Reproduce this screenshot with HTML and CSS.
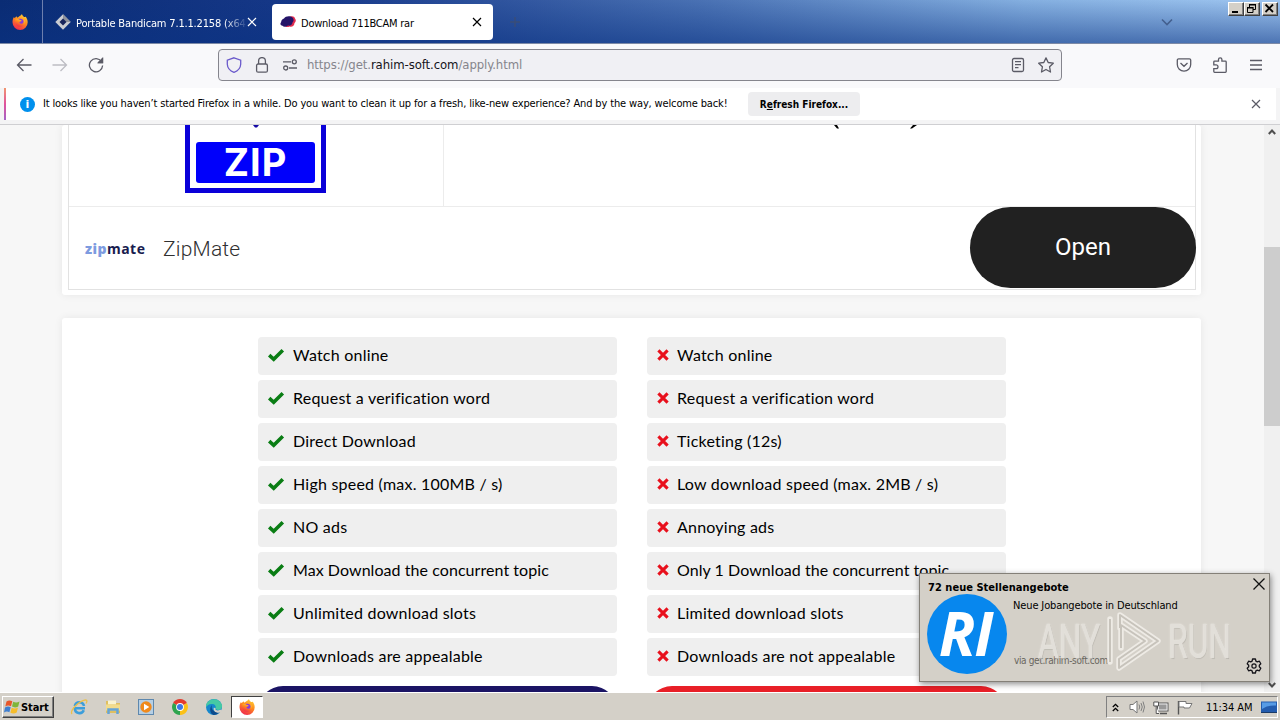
FILE: index.html
```html
<!DOCTYPE html>
<html lang="en">
<head>
<meta charset="utf-8">
<title>Download 711BCAM rar</title>
<link rel="stylesheet" href="styles.css">
</head>
<body>
<svg class="defs" width="0" height="0">
  <defs>
    <linearGradient id="fxg" x1="0.8" y1="0" x2="0.3" y2="1"><stop offset="0" stop-color="#ffd83a"/><stop offset=".45" stop-color="#ff8a1e"/><stop offset="1" stop-color="#f0284e"/></linearGradient>
    <symbol id="firefox" viewBox="0 0 16 16">
      <path d="M8 1.8c1-.2 1.400-1.200 2-1.800 0 1.300 1 1.900 2 3 .6.3 1.600-.2 1.700-.6.9 1.400 2 3.300 2 5.900a7.600 7.600 0 0 1-15.200 0c0-2.100.6-4.100 1.500-5.300.3.8.5 1 .9 1.100.5-.9 1-1.500 1.800-1.900 0 .8.500 1.200 1 1.400z" fill="url(#fxg)"/>
      <circle cx="8.200" cy="8.500" r="3.700" fill="#8a3ad8"/>
      <path d="M3.300 5.200c1.600-.7 3.200-.2 4.200.6 1 .2 2 .2 2 .9 0 .8-1.600.8-2 1.400-.3 1.500 1.700 2 3 1.300 1-.6 1.600-2 1-4 1.700 1.200 2 3.300 1.100 5-1.700 3-7 3.300-8.800-.2-.8-1.600-.9-3.400-.5-5z" fill="url(#fxg)"/>
    </symbol>
    <symbol id="check" viewBox="0 0 18 14"><path d="M2.200 7.200 6.700 11.300 15.800 2.300" fill="none" stroke="#0a7d14" stroke-width="3.600"/></symbol>
    <symbol id="cross" viewBox="0 0 12 12"><path d="M1.400 1.400 10.600 10.600M10.600 1.400 1.400 10.600" fill="none" stroke="#e8101c" stroke-width="3.100"/></symbol>
    <symbol id="x" viewBox="0 0 10 10"><path d="M1 1 9 9M9 1 1 9" fill="none" stroke="currentColor" stroke-width="1.200"/></symbol>
  </defs>
</svg>
<div class="screen">
  <header class="tabs">
    <div class="pinned"><svg width="16" height="16"><use href="#firefox"/></svg></div>
    <div class="tab idle">
      <svg width="16" height="16" viewBox="0 0 16 16"><path d="M8 .3 15.700 8 8 15.700.3 8z" fill="#c9ccd2"/><path d="M8 .3 15.700 8 8 8z" fill="#8e929c"/><path d="M8 4.500 11.500 8 8 11.500 4.500 8z" fill="#17255c"/></svg>
      <span class="tab-label">Portable Bandicam 7.1.1.2158 (x64</span>
      <svg class="tab-x" width="10" height="10"><use href="#x"/></svg>
    </div>
    <div class="tab current">
      <svg width="16" height="16" viewBox="0 0 16 16"><path d="M8.500 4c2-2.500 6-2 6.500.5 1.200 1.500 1 3.500-.5 4.500 0 2.500-2.500 4.500-5 3.500-2 1-4 .5-5-1z" fill="#e22b4e"/><path d="M4 4.500c1.500-2.500 6-3 8.500-1 1.500 1.500 1.500 3.500 0 5 0 2.500-2.500 3.500-4.500 3-2 1.500-4.500 1.500-5.500.3C.3 11.700-.2 9.500 1.200 8 1 6.500 2.500 5 4 4.500z" fill="#241468"/></svg>
      <span class="tab-label">Download 711BCAM rar</span>
      <svg class="tab-x" width="10" height="10"><use href="#x"/></svg>
    </div>
    <svg class="plus" width="12" height="12" viewBox="0 0 12 12"><path d="M6 1v10M1 6h10" stroke="#3a4d78" stroke-width="1.400"/></svg>
    <svg class="chev" width="12" height="8" viewBox="0 0 12 8"><path d="M1 1.500 6 6.500 11 1.500" fill="none" stroke="#44608f" stroke-width="1.600"/></svg>
    <div class="winbtns">
      <i class="wb"><svg width="13" height="11" viewBox="0 0 13 11"><path d="M3 8h6v2H3z"/></svg></i>
      <i class="wb"><svg width="13" height="11" viewBox="0 0 13 11"><path d="M4.500 4V1.500h6v5H8M2.500 4.500h5.500v5H2.500z" fill="none" stroke="#000"/><path d="M4 1h7v1.500H4zM2 4h6.500v1.500H2z"/></svg></i>
      <i class="wb last"><svg width="13" height="11" viewBox="0 0 13 11"><path d="M2.500 1.500 10 9M10 1.500 2.500 9" stroke="#000" stroke-width="1.800"/></svg></i>
    </div>
  </header>

  <nav class="toolbar">
    <svg width="16" height="16" viewBox="0 0 16 16" class="ic"><path d="M15.500 8H1.500M7.500 2 1.500 8l6 6"/></svg>
    <svg width="16" height="16" viewBox="0 0 16 16" class="ic off"><path d="M.5 8h14M8.500 2l6 6-6 6"/></svg>
    <svg width="16" height="16" viewBox="0 0 16 16" class="ic"><path d="M13.500 4.500A6.600 6.600 0 1 0 14.600 8.500M14.500 1v4.500H10"/><path d="M14.500 1.500v4h-4z" fill="#5b5b66"/></svg>
    <div class="urlbar">
      <svg width="16" height="16" viewBox="0 0 16 16" class="ic shield"><path d="M8 .8 14.700 3.200v4C14.500 11 11.500 14 8 15.300 4.500 14 1.500 11 1.300 7.200v-4z"/></svg>
      <svg width="16" height="16" viewBox="0 0 16 16" class="ic"><rect x="2.600" y="7" width="10.800" height="8.200" rx="1.500"/><path d="M4.600 7V4a3.400 3.400 0 0 1 6.800 0v3"/></svg>
      <svg width="16" height="16" viewBox="0 0 16 16" class="ic"><path d="M1 4.800h8M7 11h8"/><circle cx="12.300" cy="4.800" r="2"/><circle cx="3.700" cy="11" r="2"/></svg>
      <span class="url">https://get.<b>rahim-soft.com</b>/apply.html</span>
      <svg width="16" height="16" viewBox="0 0 16 16" class="ic"><rect x="2.500" y="1.500" width="11" height="13" rx="1.500"/><path d="M5 4.700h6M5 7.700h6M5 10.700h3.500"/></svg>
      <svg width="16" height="16" viewBox="0 0 16 16" class="ic"><path d="M8 .9 10.200 5.500 15.300 6.200 11.600 9.800 12.500 15 8 12.500 3.500 15 4.400 9.800.7 6.200 5.800 5.500z" stroke-linejoin="round"/></svg>
    </div>
    <svg width="16" height="16" viewBox="0 0 16 16" class="ic pocket"><path d="M2.600 1.800h10.800a1.300 1.300 0 0 1 1.300 1.300V7.500a6.700 6.700 0 0 1-13.400 0V3.100a1.300 1.300 0 0 1 1.300-1.300zM4.500 6 8 9.300 11.500 6"/></svg>
    <svg width="16" height="16" viewBox="0 0 16 16" class="ic"><path d="M1.800 7.200V4.900a.8.800 0 0 1 .8-.8H6.500V2.500a1.700 1.700 0 0 1 3.400 0v1.600h3.500a.8.800 0 0 1 .8.8v9.600a.8.800 0 0 1-.8.800H2.600a.8.800 0 0 1-.8-.8v-2.900h2.300a1.700 1.700 0 0 0 0-3.800H1.800z"/></svg>
    <svg width="16" height="16" viewBox="0 0 16 16" class="ic"><path d="M2 3.500h12M2 8h12M2 12.500h12"/></svg>
  </nav>

  <div class="notice">
    <div class="notice-in">
      <i class="info">i</i>
      <span class="notice-text">It looks like you haven’t started Firefox in a while. Do you want to clean it up for a fresh, like-new experience? And by the way, welcome back!</span>
      <span class="refresh">R<u>e</u>fresh Firefox...</span>
      <svg class="notice-x" width="10" height="10"><use href="#x"/></svg>
    </div>
  </div>

  <main class="viewport">
    <div class="page">
      <section class="card ad">
        <div class="ad-box">
          <div class="ad-top">
            <div class="ad-pic">
              <div class="zipdoc"><svg class="nub" width="8" height="3" viewBox="0 0 8 3"><path d="M1 0h6L5 2.500H3z" fill="#1409a5"/></svg><span class="zip">ZIP</span></div>
            </div>
            <div class="ad-title"><svg width="84" height="4" viewBox="0 0 84 4"><path d="M0 0h3l2 3.500H3zM83 0h-4l-3 3.500h2z" fill="#000"/></svg></div>
          </div>
          <div class="ad-bottom">
            <span class="brand"><b>zip</b>mate</span>
            <span class="brand-name">ZipMate</span>
            <span class="open">Open</span>
          </div>
        </div>
      </section>
      <section class="card compare">
        <div class="col yes">
          <div class="row"><svg width="18" height="14"><use href="#check"/></svg><span>Watch online</span></div>
          <div class="row"><svg width="18" height="14"><use href="#check"/></svg><span>Request a verification word</span></div>
          <div class="row"><svg width="18" height="14"><use href="#check"/></svg><span>Direct Download</span></div>
          <div class="row"><svg width="18" height="14"><use href="#check"/></svg><span>High speed (max. 100MB / s)</span></div>
          <div class="row"><svg width="18" height="14"><use href="#check"/></svg><span>NO ads</span></div>
          <div class="row tight"><svg width="18" height="14"><use href="#check"/></svg><span>Max Download the concurrent topic</span></div>
          <div class="row"><svg width="18" height="14"><use href="#check"/></svg><span>Unlimited download slots</span></div>
          <div class="row"><svg width="18" height="14"><use href="#check"/></svg><span>Downloads are appealable</span></div>
          <div class="cta navy"></div>
        </div>
        <div class="col no">
          <div class="row"><svg width="12" height="12"><use href="#cross"/></svg><span>Watch online</span></div>
          <div class="row"><svg width="12" height="12"><use href="#cross"/></svg><span>Request a verification word</span></div>
          <div class="row"><svg width="12" height="12"><use href="#cross"/></svg><span>Ticketing (12s)</span></div>
          <div class="row"><svg width="12" height="12"><use href="#cross"/></svg><span>Low download speed (max. 2MB / s)</span></div>
          <div class="row"><svg width="12" height="12"><use href="#cross"/></svg><span>Annoying ads</span></div>
          <div class="row tight"><svg width="12" height="12"><use href="#cross"/></svg><span>Only 1 Download the concurrent topic</span></div>
          <div class="row"><svg width="12" height="12"><use href="#cross"/></svg><span>Limited download slots</span></div>
          <div class="row"><svg width="12" height="12"><use href="#cross"/></svg><span>Downloads are not appealable</span></div>
          <div class="cta red"></div>
        </div>
      </section>
    </div>
    <div class="scrollbar">
      <svg width="8" height="6" viewBox="0 0 8 6"><path d="M.8 5 4 1.500 7.200 5" fill="none" stroke="#505050" stroke-width="2"/></svg>
      <div class="thumb"></div>
      <svg width="8" height="6" viewBox="0 0 8 6"><path d="M.8 1 4 4.500 7.200 1" fill="none" stroke="#505050" stroke-width="2"/></svg>
    </div>
  </main>

  <footer class="taskbar">
    <div class="start">
      <svg width="17" height="16" viewBox="0 0 17 16"><path d="M2.500 2.500C4.500 1 6.500 1.200 8.300 2.300L7 7.300C5 6.200 3.200 6.200 1.300 7.500z" fill="#e8572a"/><path d="M9.200 2.700c2 1.100 4 1.100 6.300-.2l-1.300 5c-2 1.200-4.200 1.200-6.200.1z" fill="#7fb53a"/><path d="M1 8.500c2-1.300 4-1.200 5.700-.2l-1.300 5c-1.700-1-3.500-1-5.400.2z" fill="#3f7fd0"/><path d="M7.700 8.700c2 1.100 4 1.100 6.300-.1l-1.300 5c-2 1.200-4.200 1.200-6.300.1z" fill="#f6bd2c"/></svg>
      <span>Start</span>
    </div>
    <div class="quick">
      <svg width="18" height="18" viewBox="0 0 18 18"><path d="M15 10.300H4.800a4.700 4.700 0 0 0 9 2M4.800 8a4.700 4.700 0 0 1 9.200 0" fill="none" stroke="#3c9edb" stroke-width="2.600"/><path d="M2 16C-.5 12.500 9 3 15.500 1.800c2 0 1.700 2 .5 3.700" fill="none" stroke="#ecc04a" stroke-width="1.300"/></svg>
      <svg width="18" height="18" viewBox="0 0 18 18"><path d="M2 3h6l1 2h7v10H2z" fill="#dfbf60"/><path d="M4 2.500h8v4H4z" fill="#f9f3d0"/><path d="M2 6.500h14v6H2z" fill="#f2dc8c"/><path d="M4.500 16v-4.500h9V16" fill="none" stroke="#65a4d6" stroke-width="2.500"/></svg>
      <svg width="18" height="18" viewBox="0 0 18 18"><rect x="1.500" y="1.500" width="15" height="15" fill="#b6cfe4" stroke="#5e88ae"/><circle cx="9" cy="9" r="5.700" fill="#f08a1c"/><path d="M7 5.800 12.300 9 7 12.200z" fill="#fff"/></svg>
      <svg width="18" height="18" viewBox="0 0 18 18"><path d="M9 9 2.100 5A8 8 0 0 1 15.900 5z" fill="#e33b2e"/><path d="M9 9 2.100 5A8 8 0 0 0 9 17z" fill="#2da44e"/><path d="M9 9l6.900-4A8 8 0 0 1 9 17z" fill="#fbc116"/><circle cx="9" cy="9" r="3.900" fill="#fff"/><circle cx="9" cy="9" r="3" fill="#3b78e7"/></svg>
      <svg width="18" height="18" viewBox="0 0 18 18"><circle cx="9" cy="9" r="8" fill="#1687cc"/><path d="M2 5c3-5 12-5.500 15 2 .5 3-1.500 5-4 5-2 0-3-.6-2.500-1.700.8-2-.5-4-3-4.300C5 5.500 3 6.500 1 9c0-1.500.3-3 1-4z" fill="#45c9a4"/><path d="M7 7c-1.500 4 1.500 7.500 7.500 7-1.500 2-4 3-6 2.900C5 16 4 10 7 7z" fill="#0c4a8c"/><path d="M10.500 10c-1 2 2 3.300 5.700 1.600l1 1.800-3 1.300c-4 .3-6-2.200-5.500-5z" fill="#d4d0c8"/></svg>
      <div class="running"><svg width="16" height="16"><use href="#firefox"/></svg></div>
    </div>
    <div class="tray">
      <svg width="7" height="9" viewBox="0 0 7 9"><path d="M.8 4 3.500 1.300 6.200 4M.8 8 3.500 5.300 6.200 8" fill="none" stroke="#000" stroke-width="1.300"/></svg>
      <svg class="t-vol" width="16" height="14" viewBox="0 0 16 14"><path d="M1 4.500h3L8 1v12L4 9.500H1z" fill="#fff" stroke="#777"/><path d="M10 4.500q1.500 2.500 0 5M12 3q2.500 4 0 8M14 1.500q3 5.500 0 11" fill="none" stroke="#808080"/></svg>
      <svg class="t-net" width="16" height="15" viewBox="0 0 16 15"><rect x="4.500" y="3" width="10.500" height="8" fill="#999" stroke="#555"/><rect x="5.500" y="4" width="8.500" height="6" fill="none" stroke="#eee"/><path d="M7 13.500h7" stroke="#555" stroke-width="1.500"/><path d="M.8 2h4.700v4H.8zM3.200 6v7.500H6" fill="#fff" stroke="#555"/></svg>
      <svg class="t-flag" width="16" height="15" viewBox="0 0 16 15"><path d="M1.500 1v13.500" stroke="#555" stroke-width="1.400"/><path d="M2 1.500h7v2h6L12.500 8H7V7H2z" fill="#fff" stroke="#777"/></svg>
      <span class="clock">11:34 AM</span>
      <svg class="t-desk" width="16" height="13" viewBox="0 0 16 13"><rect width="16" height="11" y=".5" fill="#245cae"/><path d="M1 1.500h14v3Q7 4 1 8z" fill="#579be5"/><path d="M0 11.500h16" stroke="#1b3b68"/></svg>
    </div>
  </footer>

  <aside class="toast">
    <div class="toast-title">72 neue Stellenangebote</div>
    <div class="toast-body">
      <div class="avatar">RI</div>
      <div class="toast-text"><span>Neue Jobangebote in Deutschland</span><span class="via">via get.rahim-soft.com</span></div>
    </div>
    <svg class="toast-x" width="14" height="14" viewBox="0 0 14 14"><path d="M1.500 1.500l11 11M12.500 1.500l-11 11" stroke="#111" stroke-width="1.300"/></svg>
    <svg class="toast-gear" width="16" height="16" viewBox="0 0 16 16"><path d="M6.600 1h2.800l.5 2.100 1.400.8 2.100-.7 1.400 2.500L13.300 7.200v1.600l1.500 1.500-1.400 2.500-2.100-.7-1.400.8L9.400 15H6.600l-.5-2.100-1.400-.8-2.100.7-1.400-2.500 1.500-1.500V7.200L1.200 5.700l1.400-2.500 2.100.7 1.400-.8z" fill="none" stroke="#15141a" stroke-width="1.300" stroke-linejoin="round"/><circle cx="8" cy="8" r="2.100" fill="none" stroke="#15141a" stroke-width="1.200"/></svg>
    <div class="mark">
      <span class="mark-word any">ANY</span>
      <svg width="56" height="64" viewBox="0 0 56 64"><g fill="none" stroke="#f1eee9" stroke-width="5.500" stroke-linejoin="round" stroke-linecap="round"><path d="M14 18V5L52 31 13 58V49L39 31 15 15V38"/><path d="M4 9v43"/></g><g fill="none" stroke="#c6c2ba" stroke-width="2" stroke-linejoin="round"><path d="M14 18V5L52 31 13 58V49L39 31 15 15V38"/><path d="M4 9v43"/></g></svg>
      <span class="mark-word run">RUN</span>
    </div>
  </aside>
</div>
</body>
</html>
```

FILE: styles.css
```css
* { box-sizing: border-box; }
body { margin: 0; font-family: "DejaVu Sans Condensed", "DejaVu Sans", sans-serif; font-size: 11px; color: #000; }
svg { display: block; flex: none; }
.defs { position: absolute; }
.screen { position: relative; width: 1280px; height: 720px; overflow: hidden; display: flex; flex-direction: column; }
span { white-space: nowrap; }

/* tab strip */
.tabs { height: 44px; flex: none; display: flex; align-items: center; background: linear-gradient(to bottom, rgba(10,50,130,0) 0, rgba(10,50,130,.55) 100%), linear-gradient(to right, #0a2c74 0, #17398a 25%, #4a72b4 55%, #84afe0 80%, #9fc6f0 100%); border-bottom: 1px solid #7d8aa6; }
.pinned { width: 43px; height: 43px; padding-left: 12px; display: flex; align-items: center; border-right: 1px solid #6d7fae; }
.tab { display: flex; align-items: center; height: 36px; padding-left: 8px; gap: 5px; }
.idle { width: 229px; padding-left: 12px; color: #fff; }
.tab-label { flex: none; letter-spacing: -.23px; padding-top: 3px; }
.idle .tab-label { width: 170px; letter-spacing: -.17px; overflow: hidden; -webkit-mask-image: linear-gradient(to right, #000 148px, transparent 172px); mask-image: linear-gradient(to right, #000 148px, transparent 172px); }
.idle .tab-x { margin-left: -4px; }
.current { width: 221px; background: #fff; border-radius: 4px; }
.current .tab-x { margin-left: auto; margin-right: 11px; }
.plus { margin-left: 16px; }
.chev { margin-left: auto; }
.winbtns { display: flex; align-self: flex-start; margin: 2px 2px 0 55px; }
.wb { width: 16px; height: 14px; background: #d4d0c8; border: 1px solid; border-color: #fff #404040 #404040 #fff; box-shadow: inset -1px -1px #808080; }
.wb.last { margin-left: 2px; }

/* navigation */
.toolbar { height: 44px; flex: none; padding: 0 16px 3px; background: #f9f9fb; display: flex; align-items: center; gap: 20px; }
.ic { fill: none; stroke: #5b5b66; stroke-width: 1.300; }
.ic.off { stroke: #bdbdc3; }
.ic.shield { stroke: #6a5acb; }
.urlbar { width: 844px; height: 32px; margin-left: 94px; padding: 0 7px; border: 1px solid #85858d; border-radius: 4px; background: #f0f0f4; display: flex; align-items: center; gap: 12px; }
.url { flex: 1; margin-left: -3px; font-size: 13px; letter-spacing: -.08px; color: #85858c; }
.url b { font-weight: normal; color: #15141a; }
.pocket { margin-left: 94px; }

.notice { height: 37px; flex: none; padding: 0 4px 4px; background: #f4f4f5; border-bottom: 1px solid #cfcfd2; }
.notice-in { height: 32px; background: #fff; border-left: 2px solid; border-image: linear-gradient(#f29a6d, #e0529c, #a065c9) 1; display: flex; align-items: center; padding-left: 14px; }
.info { width: 15px; height: 15px; border-radius: 50%; background: #0090ed; color: #fff; font: bold 11px/15px "DejaVu Sans", sans-serif; text-align: center; }
.notice-text { margin-left: 8px; width: 705px; letter-spacing: -.145px; padding-bottom: 2px; }
.refresh { width: 112px; height: 24px; border-radius: 4px; background: #ededef; font-weight: bold; font-size: 10px; line-height: 25px; text-align: center; }
.notice-x { margin-left: auto; margin-right: 15px; color: #5b5b66; }

/* page */
.viewport { height: 567px; flex: none; display: flex; overflow: hidden; background: #f7f7f7; }
.page { flex: 1; padding: 0 63px 0 62px; }
.card { background: #fff; box-shadow: 0 0 8px rgba(0,0,0,.07); border-radius: 3px; }
.ad { height: 170px; padding: 0 5px 5px 6px; margin-bottom: 23px; }
.ad-box { height: 165px; border: 1px solid #e2e2e2; border-top: 0; }
.ad-top { height: 82px; display: flex; border-bottom: 1px solid #ececec; }
.ad-pic { width: 375px; border-right: 1px solid #ececec; padding-left: 116px; }
.zipdoc { width: 141px; height: 68px; border: 5px solid #0a00d8; border-top: 0; display: flex; flex-direction: column; align-items: center; }
.nub { height: 3px; }
.zip { margin-top: 14px; width: 119px; height: 41px; background: #0000fb; border-radius: 3px; color: #fff; font: bold 38px/41px Inter, sans-serif; letter-spacing: 1px; text-align: center; }
.ad-title { padding-left: 390px; }
.ad-bottom { height: 82px; display: flex; align-items: center; padding-left: 16px; }
.brand { width: 78px; font: bold 14px "Open Sans", sans-serif; letter-spacing: .45px; color: #191c4f; }
.brand b { color: #7d9be0; }
.brand-name { font: 300 21px Roboto, sans-serif; color: #303030; letter-spacing: .2px; padding-top: 2px; }
.open { margin: -2px -1px 0 auto; width: 226px; height: 81px; border-radius: 41px; background: #212121; color: #fff; font: 24px/81px Roboto, sans-serif; text-align: center; position: relative; }
.compare { height: 500px; padding: 19px 0 0 196px; display: flex; gap: 30px; }
.col { width: 359px; display: flex; flex-direction: column; gap: 5px; }
.row { height: 38px; flex: none; background: #efefef; border-radius: 4px; display: flex; align-items: center; padding: 0 0 2px 9px; gap: 8px; font: 16px Lato, sans-serif; letter-spacing: .22px; }
.row span { padding-bottom: 2px; }
.tight { letter-spacing: .06px; }
.no .row { padding-left: 10px; }
.cta { height: 50px; flex: none; margin: 5px 0 0; border-radius: 25px; }
.navy { background: #1b1464; }
.red { background: #e81f27; }
.scrollbar { width: 16px; background: #f0f0f0; display: flex; flex-direction: column; align-items: center; padding: 4px 0; }
.thumb { width: 16px; height: 179px; background: #cdcdcd; margin: 112px 0 auto; }

/* taskbar */
.taskbar { flex: 1; background: #d4d0c8; border-top: 1px solid #fff; display: flex; align-items: center; padding: 1px 2px 0; }
.start { width: 52px; height: 22px; border: 1px solid; border-color: #fff #404040 #404040 #fff; box-shadow: inset -1px -1px #808080; display: flex; align-items: center; gap: 0; padding-left: 1px; font-weight: bold; }
.start span { letter-spacing: -.1px; }
.quick { display: flex; align-items: center; gap: 15.700px; margin-left: 16px; }
.running { width: 32px; height: 22px; margin-left: -7px; background: #fff; border: 1px solid; border-color: #404040 #fff #fff #404040; display: flex; align-items: center; justify-content: center; }
.tray { margin-left: auto; width: 172px; height: 22px; border: 1px solid; border-color: #808080 #fff #fff #808080; display: flex; align-items: center; padding-left: 5px; }
.t-vol { margin-left: 10px; }
.t-net { margin-left: 8px; }
.t-flag { margin-left: 8px; }
.clock { margin-left: 13px; width: 55px; letter-spacing: -.05px; }

/* notification toast */
.toast { position: absolute; left: 919px; top: 573px; width: 351px; height: 109px; background: #d4d0c8; border: 1px solid #848078; box-shadow: 1px 2px 6px rgba(0,0,0,.45); padding: 7px 7px 0; }
.toast-title { font-weight: bold; line-height: 14px; letter-spacing: .03px; padding-left: 1px; }
.toast-body { display: flex; gap: 6px; }
.avatar { width: 80px; height: 80px; flex: none; margin-top: -1px; padding-right: 3px; border-radius: 50%; background: #0787ee; color: #fff; font: italic bold 60px/79px "Open Sans", sans-serif; letter-spacing: -1px; text-align: center; }
.toast-text { height: 71px; display: flex; flex-direction: column; justify-content: space-between; padding: 4px 0 0; letter-spacing: -.13px; }
.via { font-size: 10px; color: #69665f; letter-spacing: -.37px; padding-left: 1px; }
.toast-x { position: absolute; right: 3px; top: 3px; }
.toast-gear { position: absolute; right: 7px; bottom: 7px; }
.mark { position: absolute; left: 118px; top: 36px; display: flex; align-items: center; opacity: .9; }
.mark-word { font: 400 49px/60px Roboto, sans-serif; color: #e4e1db; text-shadow: 0 0 2px #faf8f4, 1px 1px 1px #aeaaa2; transform-origin: left center; transform: scaleX(.65); }
.any { width: 68px; }
.run { width: 66px; margin-left: 6px; }
```
